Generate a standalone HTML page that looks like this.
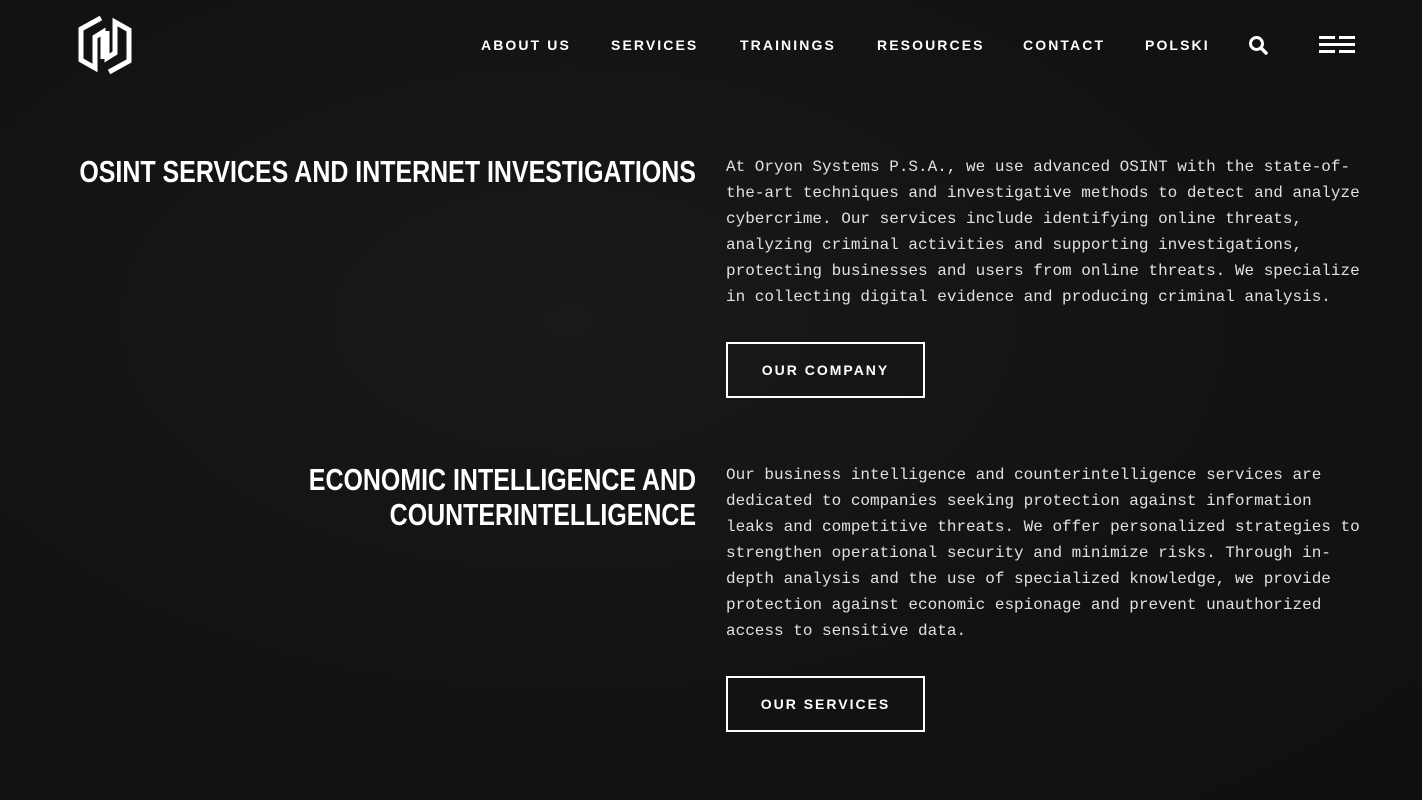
<!DOCTYPE html>
<html><head><meta charset="utf-8"><style>
html,body{margin:0;padding:0;width:1422px;height:800px;overflow:hidden;background:#121212;}
body{position:relative;font-family:"Liberation Sans",sans-serif;color:#fff;
background:radial-gradient(ellipse at 40% 40%,#19191b 0%,#121212 60%,#101010 100%);}
.nav a{position:absolute;top:37px;font-size:14px;font-weight:bold;letter-spacing:2.1px;color:#fff;}
h2{position:absolute;margin:0;font-size:31px;font-weight:bold;line-height:35px;text-align:right;right:726px;white-space:nowrap;}
h2 span{display:inline-block;transform:scaleX(0.805);transform-origin:right center;}
p{position:absolute;left:726px;margin:0;font-family:"Liberation Mono",monospace;font-size:16px;line-height:26px;color:#e0e0e0;white-space:pre;}
.btn{position:absolute;left:726px;width:195px;height:52px;border:2px solid #fff;font-size:14px;font-weight:bold;letter-spacing:2px;line-height:52px;text-align:center;}
.m{position:absolute;height:3px;background:#fff;}
</style></head><body>
<svg style="position:absolute;left:78px;top:15px" width="54" height="60" viewBox="0 0 54 60">
<g fill="none" stroke="#fff" stroke-width="5" stroke-linejoin="miter">
<path d="M23 3 L3 14 L3 45 L17 53 L17 22 L25 17 L25 44"/>
<path d="M31 57 L51 46 L51 15 L37 7 L37 38 L29 43 L29 16"/>
</g></svg>
<div class="nav">
<a style="left:481px">ABOUT US</a>
<a style="left:611px">SERVICES</a>
<a style="left:740px">TRAININGS</a>
<a style="left:877px">RESOURCES</a>
<a style="left:1023px">CONTACT</a>
<a style="left:1145px">POLSKI</a>
</div>
<svg style="position:absolute;left:1248px;top:35px" width="22" height="22" viewBox="0 0 22 22"><circle cx="8.5" cy="8.5" r="6" fill="none" stroke="#fff" stroke-width="3"/><path d="M13 13 L18 18" stroke="#fff" stroke-width="3.5" stroke-linecap="round"/></svg>
<div class="m" style="left:1319px;top:36px;width:16px"></div><div class="m" style="left:1339px;top:36px;width:16px"></div>
<div class="m" style="left:1319px;top:43px;width:36px"></div>
<div class="m" style="left:1319px;top:50px;width:16px"></div><div class="m" style="left:1339px;top:50px;width:16px"></div>
<h2 style="top:154px"><span>OSINT SERVICES AND INTERNET INVESTIGATIONS</span></h2>
<p style="top:154px">At Oryon Systems P.S.A., we use advanced OSINT with the state-of-
the-art techniques and investigative methods to detect and analyze
cybercrime. Our services include identifying online threats,
analyzing criminal activities and supporting investigations,
protecting businesses and users from online threats. We specialize
in collecting digital evidence and producing criminal analysis.</p>
<div class="btn" style="top:342px">OUR COMPANY</div>
<h2 style="top:462px"><span>ECONOMIC INTELLIGENCE AND<br>COUNTERINTELLIGENCE</span></h2>
<p style="top:462px">Our business intelligence and counterintelligence services are
dedicated to companies seeking protection against information
leaks and competitive threats. We offer personalized strategies to
strengthen operational security and minimize risks. Through in-
depth analysis and the use of specialized knowledge, we provide
protection against economic espionage and prevent unauthorized
access to sensitive data.</p>
<div class="btn" style="top:676px">OUR SERVICES</div>
</body></html>
